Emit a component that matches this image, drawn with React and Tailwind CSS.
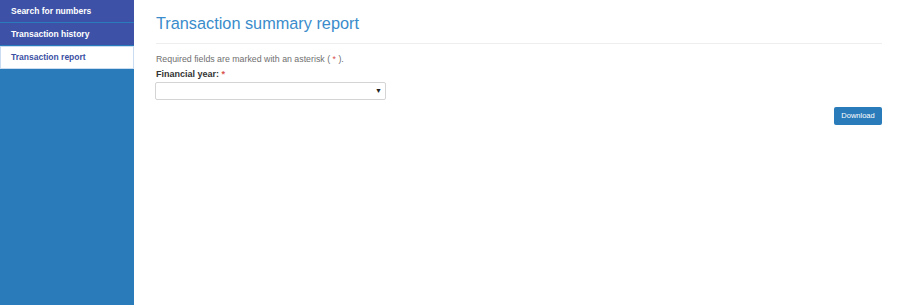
const navItems = [
  { label: 'Search for numbers', active: false },
  { label: 'Transaction history', active: false },
  { label: 'Transaction report', active: true },
];

export default function App() {
  return (
    <div className="flex min-h-[305px] w-full bg-white font-['Liberation_Sans',Arial,sans-serif]">
      <aside className="w-[134px] shrink-0 bg-[#2a7bb9]">
        <ul className="flex flex-col gap-px pb-px">
          {navItems.map((item) =>
            item.active ? (
              <li
                key={item.label}
                className="flex h-[23px] items-center border border-[#c9dcf2] bg-white pl-[10px] text-[8.5px] font-bold text-[#3b4fa3]"
              >
                {item.label}
              </li>
            ) : (
              <li
                key={item.label}
                className="flex h-[22px] items-center bg-[#3d51a6] pl-[11px] text-[8.5px] font-bold text-white"
              >
                {item.label}
              </li>
            )
          )}
        </ul>
      </aside>

      <main className="flex-1 pl-[22px] pr-[18px] pt-[12px]">
        <h1 className="text-[16.3px] leading-[22px] text-[#3a8ccb]">Transaction summary report</h1>
        <hr className="mt-[9px] border-t border-[#eeeeee]" />

        <p className="mt-[9px] text-[8.8px] leading-[12px] text-[#6f6f6f]">
          Required fields are marked with an asterisk ( <span className="text-[#d9534f]">*</span> ).
        </p>

        <label className="mt-[3px] block text-[9px] font-bold leading-[12px] text-[#333333]">
          Financial year: <span className="text-[#d9534f]">*</span>
        </label>

        <div className="relative mt-[2px] h-[18px] w-[231px] -ml-px rounded-[2px] border border-[#d4d4d4] bg-white">
          <span className="absolute right-[3px] top-[3px] text-[7px] text-[#222222]">▼</span>
        </div>

        <div className="mt-[7px] flex justify-end">
          <button className="h-[18px] w-[48px] rounded-[2px] bg-[#2a7bb9] text-[7.5px] text-white">
            Download
          </button>
        </div>
      </main>
    </div>
  );
}
